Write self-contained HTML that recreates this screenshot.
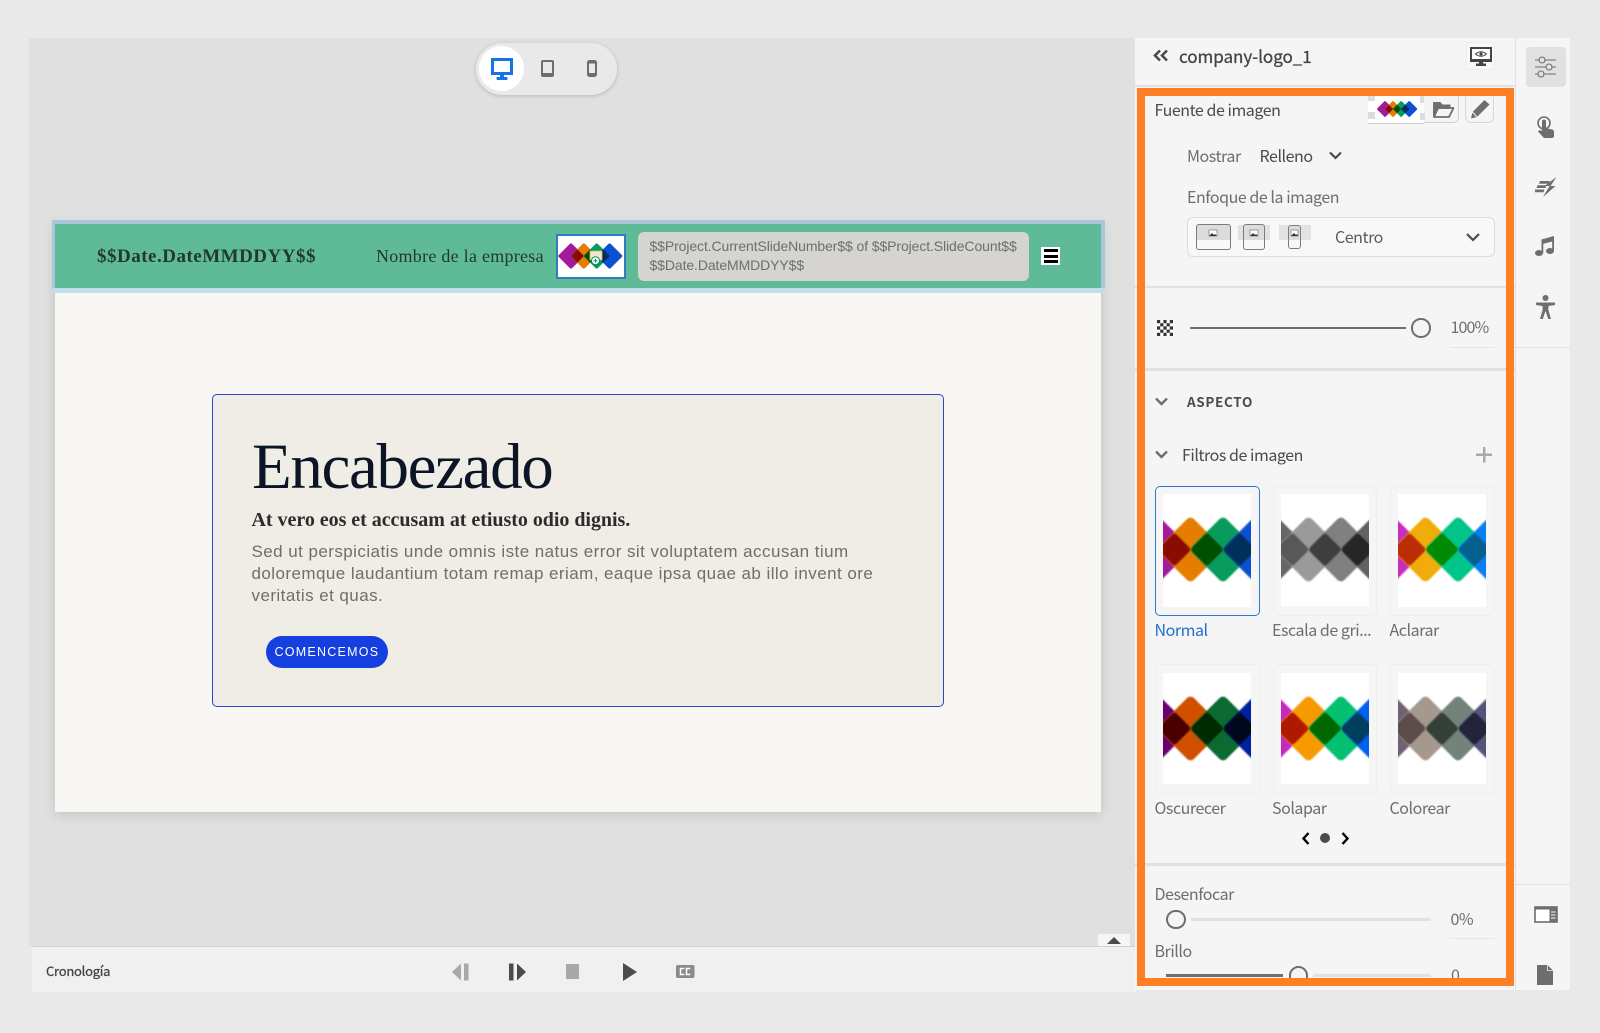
<!DOCTYPE html>
<html lang="es"><head><meta charset="utf-8"><title>company-logo_1</title>
<style>
html,body{margin:0;padding:0;width:1600px;height:1033px;overflow:hidden;background:#e9e9e9}
*{box-sizing:border-box}
.a{position:absolute}
.t{position:absolute;white-space:nowrap;line-height:20px;height:20px;margin-top:-1px;margin-left:-.5px;font-family:"Noto Sans CJK JP","Liberation Sans",sans-serif;font-size:16px;letter-spacing:-.45px;color:#6e6e6e}
.d{color:#4b4b4b}
.s{position:absolute;white-space:nowrap;font-family:"Liberation Serif",serif}
.b{position:absolute;white-space:nowrap;font-family:"Liberation Sans",sans-serif}
.card{position:absolute;width:105px;height:130px;border:1px solid #eeeeee;border-radius:5px}
svg{position:absolute;overflow:visible}
.thumb{background:#fff}
</style></head><body>
<svg width="0" height="0" style="position:absolute"><defs>
<clipPath id="cp"><rect x="0" y="0" width="88" height="113"/></clipPath>
<g id="dia"><g clip-path="url(#cp)"><g style="filter:blur(.7px)">
<rect x="-24" y="-24" width="48" height="48" rx="5" transform="translate(-5 55.5) rotate(45)" style="fill:var(--p)"/>
<rect x="-24" y="-24" width="48" height="48" rx="5" transform="translate(27.500 55.500) rotate(45)" style="fill:var(--o)"/>
<rect x="-24" y="-24" width="48" height="48" rx="5" transform="translate(60 55.5) rotate(45)" style="fill:var(--g)"/>
<rect x="-24" y="-24" width="48" height="48" rx="5" transform="translate(92.500 55.500) rotate(45)" style="fill:var(--b)"/>
<rect x="-12" y="-12" width="24" height="24" rx="3" transform="translate(11.500 55.500) rotate(45)" style="fill:var(--x)"/>
<rect x="-12" y="-12" width="24" height="24" rx="3" transform="translate(44 55.500) rotate(45)" style="fill:var(--y)"/>
<rect x="-12" y="-12" width="24" height="24" rx="3" transform="translate(76.500 55.500) rotate(45)" style="fill:var(--z)"/>
</g></g></g>
<g id="dia2" style="filter:blur(.2px)">
<rect x="-24" y="-24" width="48" height="48" rx="4" transform="translate(0 0) rotate(45)" fill="#a2199a"/>
<rect x="-24" y="-24" width="48" height="48" rx="4" transform="translate(33 0) rotate(45)" fill="#e57e00"/>
<rect x="-24" y="-24" width="48" height="48" rx="4" transform="translate(66 0) rotate(45)" fill="#079b5c"/>
<rect x="-24" y="-24" width="48" height="48" rx="4" transform="translate(99 0) rotate(45)" fill="#0a50d0"/>
<rect x="-12" y="-12" width="24" height="24" rx="2" transform="translate(16.500 0) rotate(45)" fill="#8a0c00"/>
<rect x="-12" y="-12" width="24" height="24" rx="2" transform="translate(49.500 0) rotate(45)" fill="#015000"/>
<rect x="-12" y="-12" width="24" height="24" rx="2" transform="translate(82.500 0) rotate(45)" fill="#002f5c"/>
</g>
</defs></svg>

<!-- canvas -->
<div class="a" style="left:29px;top:38px;width:1106px;height:908px;background:#e0e0e0"></div>

<!-- device pill -->
<div class="a" style="left:476px;top:43px;width:141px;height:52px;background:#e9e9e9;border-radius:26px;box-shadow:0 1px 4px rgba(0,0,0,.18)"></div>
<div class="a" style="left:479px;top:46px;width:45px;height:45px;background:#fff;border-radius:50%"></div>
<svg style="left:491px;top:58px" width="23" height="23"><rect x="1.500" y="1.500" width="19" height="14" fill="none" stroke="#1473e6" stroke-width="3"/><rect x="9" y="16" width="4" height="4" fill="#1473e6"/><rect x="5.500" y="19" width="11" height="3" rx="1" fill="#1473e6"/></svg>
<svg style="left:541px;top:60px" width="13" height="17"><rect x="1" y="1" width="11" height="15" rx="1" fill="none" stroke="#6e6e6e" stroke-width="2"/><rect x="1" y="13" width="11" height="3" fill="#6e6e6e"/></svg>
<svg style="left:587px;top:60px" width="10" height="17"><rect x="1" y="1" width="8" height="15" rx="1.500" fill="none" stroke="#6e6e6e" stroke-width="2"/><rect x="1" y="13" width="8" height="3" fill="#6e6e6e"/><rect x="1" y="1" width="8" height="2.500" fill="#6e6e6e"/></svg>

<!-- slide -->
<div class="a" style="left:55px;top:224px;width:1045.500px;height:588px;background:#f8f7f3;box-shadow:0 2px 12px rgba(0,0,0,.14)"></div>
<div class="a" style="left:51.500px;top:220px;width:1053px;height:73px;background:#a9c6da"></div>
<div class="a" style="left:51.500px;top:288px;width:1053px;height:5px;background:#c2deea"></div>
<div class="a" style="left:55px;top:224px;width:1045.500px;height:64px;background:#5fba97"></div>
<div class="s" style="left:97px;top:245px;font-size:19px;line-height:24px;font-weight:bold;color:#23392f;letter-spacing:.5px">$$Date.DateMMDDYY$$</div>
<div class="s" style="left:376px;top:244px;font-size:18px;line-height:24px;color:#23392f;letter-spacing:.27px">Nombre de la empresa</div>
<div class="a" style="left:556px;top:234px;width:70px;height:45px;background:#fff;border:2px solid #2f7cc0"></div>
<svg style="left:571px;top:256px" width="40" height="2"><g transform="scale(.39)"><use href="#dia2"/></g>
<rect x="19" y="-5" width="12" height="9" fill="#f0e7d2" stroke="#d8b46a" stroke-width=".8"/><circle cx="24.500" cy="4.700" r="4" fill="#fff" stroke="#0a8a60"/><path d="M22.500 4.700h4M24.500 2.700v4" stroke="#0a8a60"/></svg>
<div class="a" style="left:637.500px;top:232px;width:391px;height:49px;background:#d5d4d0;border-radius:6px"></div>
<div class="b" style="left:649.500px;top:237px;font-size:14px;line-height:18.600px;color:#6e6e6e;letter-spacing:-.1px">$$Project.CurrentSlideNumber$$ of $$Project.SlideCount$$<br>$$Date.DateMMDDYY$$</div>
<div class="a" style="left:1041px;top:247px;width:19px;height:18px;background:#fff"></div>
<div class="a" style="left:1044px;top:249px;width:14px;height:3px;background:#000"></div>
<div class="a" style="left:1044px;top:254.500px;width:14px;height:3px;background:#000"></div>
<div class="a" style="left:1044px;top:260px;width:14px;height:3px;background:#000"></div>

<!-- hero card -->
<div class="a" style="left:212px;top:394px;width:732px;height:313px;background:#f0ede6;border:1.500px solid #2a47c8;border-radius:5px"></div>
<div class="s" style="left:252px;top:428px;font-size:65px;line-height:78px;color:#0c1526;letter-spacing:-1.350px">Encabezado</div>
<div class="s" style="left:251.500px;top:507px;font-size:20px;line-height:26px;font-weight:bold;color:#2c2c2c;letter-spacing:-.03px">At vero eos et accusam at etiusto odio dignis.</div>
<div class="b" style="left:251.500px;top:541px;font-size:17px;line-height:22px;color:#6e6e6e;letter-spacing:.44px">Sed ut perspiciatis unde omnis iste natus error sit voluptatem accusan tium<br>doloremque laudantium totam remap eriam, eaque ipsa quae ab illo invent ore<br>veritatis et quas.</div>
<div class="a" style="left:265.500px;top:636px;width:122.500px;height:32px;background:#163fe0;border-radius:16px"></div>
<div class="b" style="left:274.500px;top:644px;font-size:12.500px;line-height:16px;color:#fff;letter-spacing:1.250px">COMENCEMOS</div>

<!-- timeline -->
<div class="a" style="left:1098px;top:934px;width:32px;height:12px;background:#f5f5f5"></div>
<svg style="left:1107px;top:937px" width="14" height="8"><path d="M0 7L7 0l7 7z" fill="#4b4b4b"/></svg>
<div class="a" style="left:31.500px;top:946px;width:1104px;height:46px;background:#f0f0f0;border-top:1px solid #d2d2d2"></div>
<div class="t" style="left:46.500px;top:962px;font-size:13px;letter-spacing:-.25px;color:#444;-webkit-text-stroke:.3px #444">Cronología</div>
<svg style="left:452px;top:963px" width="18" height="18" fill="#a8a8a8"><path d="M0 9l9-8.500v17z"/><rect x="12" y="0.500" width="4.500" height="17"/></svg>
<svg style="left:509px;top:963px" width="18" height="18" fill="#4b4b4b"><rect x="0" y="0.500" width="4.500" height="17"/><path d="M8 .5l9 8.500-9 8.500z"/></svg>
<svg style="left:566px;top:964px" width="14" height="16"><rect width="13" height="15" fill="#a8a8a8"/></svg>
<svg style="left:623px;top:963px" width="15" height="18"><path d="M0 0l14 9-14 9z" fill="#4b4b4b"/></svg>
<svg style="left:676px;top:965px" width="19" height="14"><rect width="18.500" height="13" rx="2" fill="#8a8a8a"/><path d="M8.300 3.500H4.500v6h3.800M14.300 3.500h-3.800v6h3.800" fill="none" stroke="#fff" stroke-width="1.500"/></svg>

<!-- panel -->
<div class="a" style="left:1135px;top:38px;width:381px;height:952px;background:#f5f5f5;border-right:1px solid #e2e2e2"></div>
<svg style="left:1153px;top:49px" width="16" height="14" fill="none" stroke="#4b4b4b" stroke-width="2.600"><path d="M7 1.500L2 6.500l5 5M14 1.500L9 6.500l5 5"/></svg>
<div class="t d" style="left:1179.500px;top:47px;font-size:17px;color:#444;letter-spacing:-.02px;-webkit-text-stroke:.3px #444">company-logo_1</div>
<div class="a" style="left:1466px;top:42px;width:29px;height:28px;border:1px solid #ececec;border-radius:4px;background:#f8f8f8"></div>
<svg style="left:1470px;top:47px" width="22" height="20"><rect x="1" y="1" width="20" height="13" fill="#fff" stroke="#444" stroke-width="2"/><rect x="1" y="12" width="20" height="2.500" fill="#444"/><path d="M5.500 7q5.500-4.500 11 0q-5.500 4.500-11 0z" fill="none" stroke="#444"/><circle cx="11" cy="7" r="1.600" fill="#444"/><rect x="9" y="14" width="4" height="3" fill="#444"/><rect x="6" y="16.500" width="10" height="2.500" fill="#444"/></svg>
<div class="a" style="left:1135px;top:85px;width:380px;height:2px;background:#e1e1e1"></div>

<div class="t d" style="left:1155px;top:100px">Fuente de imagen</div>
<div class="a" style="left:1423px;top:90px;width:36px;height:33px;border:1px solid #d2d2d2;border-radius:0 0 6px 0"></div>
<div class="a" style="left:1368px;top:90px;width:56px;height:33px;background:#fff;box-shadow:0 1px 0 #d2d2d2"></div>
<div class="a" style="left:1368px;top:96px;width:7px;height:5px;background:#dcdcdc"></div>
<div class="a" style="left:1368px;top:112px;width:7px;height:7px;background:#dcdcdc"></div>
<div class="a" style="left:1420px;top:96px;width:4px;height:7px;background:#dcdcdc"></div>
<div class="a" style="left:1420px;top:113px;width:5px;height:7px;background:#dcdcdc"></div>
<svg style="left:1378px;top:109px" width="40" height="2"><g transform="translate(7 0) scale(.245)"><use href="#dia2"/></g></svg>
<svg style="left:1433px;top:100px" width="22" height="19" fill="none" stroke="#6e6e6e" stroke-width="1.800"><path d="M1 3h6l2 2.500h7.500V8"/><path d="M1 3v14h15L20.500 8H5L1 17" stroke-linejoin="round"/><path d="M1 3h6l2 2.500h7.500V8H5L1 14z" fill="#6e6e6e"/></svg>
<div class="a" style="left:1465px;top:90px;width:29px;height:33px;border:1px solid #d8d8d8;border-radius:6px"></div>
<svg style="left:1470px;top:99px" width="21" height="20"><path d="M14.500 1l5 4.500L7 18l-6 1.500L2.500 13z" fill="#6e6e6e"/><path d="M2.500 13L7 18" stroke="#f5f5f5" stroke-width="1"/></svg>

<div class="t" style="left:1187.500px;top:146px">Mostrar</div>
<div class="t d" style="left:1260px;top:146px">Relleno</div>
<svg style="left:1329px;top:151px" width="13" height="9" fill="none" stroke="#4b4b4b" stroke-width="2.200"><path d="M1 1.500l5.500 5.500L12 1.500"/></svg>
<div class="t" style="left:1187.500px;top:187px">Enfoque de la imagen</div>
<div class="a" style="left:1187px;top:217px;width:308px;height:40px;background:#f8f8f8;border:1px solid #dcdcdc;border-radius:6px"></div>
<div class="a" style="left:1196px;top:224px;width:35px;height:26px;border:1.300px solid #7b7b7b;border-radius:3px;background:linear-gradient(#dcdcdc 0,#dcdcdc 15px,#f8f8f8 15px)"></div>
<div class="a" style="left:1238px;top:225px;width:32px;height:15px;background:#e2e2e2"></div>
<div class="a" style="left:1243px;top:224px;width:22px;height:26px;border:1.300px solid #7b7b7b;border-radius:3px;background:linear-gradient(#dcdcdc 0,#dcdcdc 15px,#f8f8f8 15px)"></div>
<div class="a" style="left:1279px;top:225px;width:32px;height:15px;background:#e2e2e2"></div>
<div class="a" style="left:1288px;top:225px;width:13px;height:24px;border:1.300px solid #7b7b7b;border-radius:3px;background:linear-gradient(#dcdcdc 0,#dcdcdc 14px,#f8f8f8 14px)"></div>
<svg style="left:1209px;top:230px" width="8" height="7"><rect width="8" height="6" fill="#fff" stroke="#666" stroke-width=".6"/><path d="M0 6l3-3 2 2 1-1 2 2z" fill="#333"/></svg>
<svg style="left:1250px;top:230px" width="8" height="7"><rect width="8" height="6" fill="#fff" stroke="#666" stroke-width=".6"/><path d="M0 6l3-3 2 2 1-1 2 2z" fill="#333"/></svg>
<svg style="left:1291px;top:230px" width="8" height="7"><rect width="7" height="6" fill="#fff" stroke="#666" stroke-width=".6"/><path d="M0 6l3-3 2 2 1-1 1 2z" fill="#333"/></svg>
<div class="t" style="left:1335.500px;top:227px;color:#5c5c5c">Centro</div>
<svg style="left:1466px;top:232px" width="14" height="10" fill="none" stroke="#4b4b4b" stroke-width="2.200"><path d="M1 2l6 6 6-6"/></svg>
<div class="a" style="left:1135px;top:286px;width:380px;height:2px;background:#e1e1e1"></div>

<svg style="left:1157px;top:320px" width="16" height="16"><rect width="16" height="16" fill="#fff"/><path d="M0 0h3.200v3.200H0zM6.400 0h3.200v3.200H6.400zM12.800 0H16v3.200h-3.200zM3.200 3.200h3.200v3.200H3.200zM9.600 3.200h3.200v3.200H9.600zM0 6.400h3.200v3.200H0zM6.400 6.400h3.200v3.200H6.400zM12.800 6.400H16v3.200h-3.200zM3.200 9.600h3.200v3.200H3.200zM9.600 9.600h3.200v3.200H9.600zM0 12.800h3.200V16H0zM6.400 12.800h3.200V16H6.400zM12.800 12.800H16V16h-3.200z" fill="#333"/></svg>
<div class="a" style="left:1190px;top:327px;width:216px;height:2px;background:#6e6e6e"></div>
<div class="a" style="left:1411px;top:318px;width:19.500px;height:19.500px;border:2px solid #6e6e6e;border-radius:50%"></div>
<div class="t" style="left:1451px;top:317px;letter-spacing:-.9px">100%</div>
<div class="a" style="left:1450px;top:347px;width:45px;height:1px;background:#e6e6e6"></div>
<div class="a" style="left:1135px;top:368px;width:380px;height:3px;background:#e1e1e1"></div>

<svg style="left:1155px;top:397px" width="13" height="9" fill="none" stroke="#6e6e6e" stroke-width="2.400"><path d="M1 1.500l5.500 5.500L12 1.500"/></svg>
<div class="t d" style="left:1187.500px;top:392px;font-size:13.500px;font-weight:bold;letter-spacing:.65px">ASPECTO</div>
<svg style="left:1155px;top:449.500px" width="13" height="9" fill="none" stroke="#6e6e6e" stroke-width="2.400"><path d="M1 1.500l5.500 5.500L12 1.500"/></svg>
<div class="t d" style="left:1182.500px;top:445px">Filtros de imagen</div>
<svg style="left:1476px;top:447px" width="16" height="16"><path d="M7 0h2.500v15.500H7z M0 6.500h16V9H0z" fill="#a8a8a8"/></svg>

<!-- filter cards row 1 -->
<div class="card" style="left:1155px;top:486px;border-color:#2a78d2"></div>
<div class="a thumb" style="left:1163px;top:494px;width:88px;height:113px"></div>
<svg style="left:1163px;top:494px;--p:#a2199a;--o:#e57e00;--g:#079b5c;--b:#0a50d0;--x:#8a0c00;--y:#015000;--z:#002f5c" width="88" height="113"><use href="#dia"/></svg>
<div class="card" style="left:1272.500px;top:486px;width:104.500px"></div>
<div class="a thumb" style="left:1281px;top:494px;width:88px;height:112px"></div>
<svg style="left:1281px;top:494px;--p:#666;--o:#9a9a9a;--g:#808080;--b:#626262;--x:#585858;--y:#3e3e3e;--z:#262626" width="88" height="113"><use href="#dia"/></svg>
<div class="card" style="left:1390px;top:486px"></div>
<div class="a thumb" style="left:1398px;top:494px;width:88px;height:113px"></div>
<svg style="left:1398px;top:494px;--p:#c72cc0;--o:#f0ac0a;--g:#00c48a;--b:#0a80f0;--x:#bb2e05;--y:#008a05;--z:#055f90" width="88" height="113"><use href="#dia"/></svg>
<div class="t" style="left:1155px;top:620px;color:#1f6fd2">Normal</div>
<div class="t" style="left:1272.500px;top:620px">Escala de gri...</div>
<div class="t" style="left:1390px;top:620px">Aclarar</div>

<!-- filter cards row 2 -->
<div class="card" style="left:1155px;top:664px"></div>
<div class="a thumb" style="left:1163px;top:672.500px;width:88px;height:111.500px"></div>
<svg style="left:1163px;top:672.500px;--p:#6a0070;--o:#d05000;--g:#0a6a30;--b:#0020a0;--x:#4a0000;--y:#002a00;--z:#00081e" width="88" height="113"><use href="#dia"/></svg>
<div class="card" style="left:1272.500px;top:664px;width:104.500px"></div>
<div class="a thumb" style="left:1281px;top:672.500px;width:88px;height:111.500px"></div>
<svg style="left:1281px;top:672.500px;--p:#c828c0;--o:#f79a00;--g:#05c070;--b:#0060f0;--x:#b01800;--y:#006800;--z:#003f60" width="88" height="113"><use href="#dia"/></svg>
<div class="card" style="left:1390px;top:664px"></div>
<div class="a thumb" style="left:1398px;top:672.500px;width:88px;height:111.500px"></div>
<svg style="left:1398px;top:672.500px;--p:#6f6275;--o:#a5988f;--g:#73827a;--b:#55557a;--x:#5c4c4c;--y:#343f38;--z:#22253a" width="88" height="113"><use href="#dia"/></svg>
<div class="t" style="left:1155px;top:798px">Oscurecer</div>
<div class="t" style="left:1272.500px;top:798px">Solapar</div>
<div class="t" style="left:1390px;top:798px">Colorear</div>

<svg style="left:1302px;top:832px" width="8" height="13" fill="none" stroke="#000" stroke-width="2.400"><path d="M6.500 1L1.500 6.500l5 5.500"/></svg>
<div class="a" style="left:1320px;top:833px;width:10px;height:10px;border-radius:50%;background:#4b4b4b"></div>
<svg style="left:1341px;top:832px" width="8" height="13" fill="none" stroke="#000" stroke-width="2.400"><path d="M1.500 1l5 5.500-5 5.500"/></svg>

<div class="a" style="left:1135px;top:863px;width:380px;height:3px;background:#e1e1e1"></div>
<div class="t" style="left:1155px;top:884px">Desenfocar</div>
<div class="a" style="left:1191px;top:917.500px;width:240px;height:3px;background:#e1e1e1;border-radius:2px"></div>
<div class="a" style="left:1166px;top:909.500px;width:19.500px;height:19.500px;border:2px solid #6e6e6e;border-radius:50%"></div>
<div class="t" style="left:1451px;top:909px">0%</div>
<div class="a" style="left:1450px;top:938px;width:45px;height:1px;background:#e6e6e6"></div>
<div class="t" style="left:1155px;top:941px">Brillo</div>
<div class="a" style="left:1166px;top:973.500px;width:117px;height:3px;background:#6e6e6e"></div>
<div class="a" style="left:1313px;top:973.500px;width:118px;height:3px;background:#e1e1e1"></div>
<div class="a" style="left:1288.500px;top:966px;width:19.500px;height:19.500px;border:2px solid #6e6e6e;border-radius:50%"></div>
<div class="t" style="left:1451.500px;top:965px">0</div>

<!-- orange highlight -->
<div class="a" style="left:1137px;top:88px;width:377px;height:898px;border:8px solid #ff7f27"></div>
<div class="a" style="left:1137px;top:986px;width:378px;height:4px;background:#f5f5f5"></div>

<!-- right rail -->
<div class="a" style="left:1516px;top:38px;width:54px;height:952px;background:#f5f5f5"></div>
<div class="a" style="left:1516px;top:347px;width:54px;height:1px;background:#e2e2e2"></div>
<div class="a" style="left:1516px;top:884px;width:54px;height:1px;background:#e2e2e2"></div>
<div class="a" style="left:1526px;top:47px;width:40px;height:40px;background:#e1e1e1;border-radius:4px"></div>
<svg style="left:1535px;top:56px" width="22" height="22" fill="none" stroke="#6e6e6e" stroke-width="1.100"><path d="M0 4h4M10 4h11M0 11h11M17 11h4M0 18h3M9 18h12"/><circle cx="7" cy="4" r="3"/><circle cx="14" cy="11" r="3"/><circle cx="6" cy="18" r="3"/></svg>
<svg style="left:1536px;top:116px" width="20" height="23"><circle cx="8" cy="7" r="6" fill="none" stroke="#6e6e6e" stroke-width="1.600"/><path d="M6 5.500a2 2 0 0 1 4 0V12l6 1.500a2.500 2.500 0 0 1 2 2.500v4a2 2 0 0 1-2 2H8L2 15.500l1.500-1.500L6 15z" fill="#6e6e6e"/></svg>
<svg style="left:1535px;top:177px" width="22" height="20" fill="#6e6e6e"><path d="M5 4h10l-1.200 2.800H4zM2.500 8.200h9l-1 2.800H1.500zM0 12.500h9.500l-1 2.800H0z"/><path d="M21.500 0L9.500 9h5L8 20l12.500-11h-5z"/></svg>
<svg style="left:1535px;top:236px" width="20" height="21" fill="#6e6e6e"><ellipse cx="4" cy="17" rx="4" ry="3"/><ellipse cx="15" cy="15" rx="4" ry="3"/><path d="M6.500 17V4.500L19 1v14h-1.800V5.500L8.300 7.800V17z"/><path d="M6.500 3.500L19 0v4L6.500 7.500z"/></svg>
<svg style="left:1536px;top:295px" width="19" height="24" fill="#6e6e6e"><circle cx="9.500" cy="3" r="3"/><path d="M0 7.500h19v2.500l-6.500 1-.2 3.500L15 24h-2.800l-2.700-8-2.700 8H4l2.700-9.500L6.500 11 0 10z"/></svg>
<svg style="left:1534px;top:906px" width="24" height="18"><rect x="1" y="1" width="22" height="15" fill="#fff" stroke="#6e6e6e" stroke-width="1.600"/><rect x="1" y="1" width="22" height="2.500" fill="#6e6e6e"/><rect x="15.500" y="1" width="7.500" height="15" fill="#6e6e6e"/><path d="M17 6h4.500M17 9h4.500M17 12h4.500" stroke="#fff" stroke-width="1.100"/></svg>
<svg style="left:1537px;top:965px" width="17" height="20"><path d="M0 0h10.500L16 5.500V20H0z" fill="#6e6e6e"/><path d="M10.500 0v5.500H16" fill="none" stroke="#f5f5f5" stroke-width=".8"/></svg>
</body></html>
